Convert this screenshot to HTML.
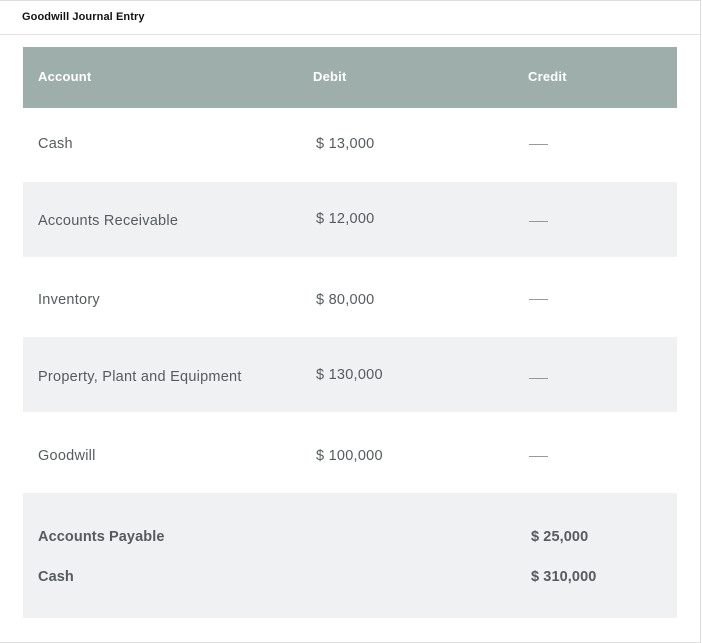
<!DOCTYPE html>
<html><head><style>
body{margin:0;width:702px;height:643px;background:#fff;font-family:"Liberation Sans",sans-serif;position:relative;overflow:hidden}
.frame{position:absolute;left:0;top:0;width:700px;height:641px;border:1px solid #ddd;border-left:none}
.title{position:absolute;left:22px;top:11px;font-size:11px;font-weight:bold;color:#111;letter-spacing:0.1px}
.hl{position:absolute;left:0;top:34px;width:701px;height:1px;background:#e2e2e2}
.r{position:absolute;left:23px;width:654px}
.hd{background:#9eafab;top:47px;height:61px}
.g{background:#f0f1f2}
.t{position:absolute;font-size:14.5px;color:#555b5e;letter-spacing:0.25px}
.h{position:absolute;font-size:13px;font-weight:bold;color:#fff;letter-spacing:0.2px}
.b{font-weight:bold;letter-spacing:0.1px}
.d{position:absolute;left:529px;width:19px;height:1px;background:#999}
</style></head><body>
<div class="frame"></div>
<div class="title">Goodwill Journal Entry</div>
<div class="hl"></div>
<div class="r hd"></div>
<div class="h" style="left:38px;top:69px">Account</div>
<div class="h" style="left:313px;top:69px">Debit</div>
<div class="h" style="left:528px;top:69px">Credit</div>
<div class="r g" style="top:182px;height:75px"></div>
<div class="r g" style="top:337px;height:75px"></div>
<div class="r g" style="top:493px;height:125px"></div>

<div class="t" style="left:38px;top:136px">Cash</div>
<div class="t" style="left:316px;top:136px">$ 13,000</div>
<div class="d" style="top:144px"></div>

<div class="t" style="left:38px;top:213px">Accounts Receivable</div>
<div class="t" style="left:316px;top:211px">$ 12,000</div>
<div class="d" style="top:221px"></div>

<div class="t" style="left:38px;top:292px">Inventory</div>
<div class="t" style="left:316px;top:292px">$ 80,000</div>
<div class="d" style="top:299px"></div>

<div class="t" style="left:38px;top:369px">Property, Plant and Equipment</div>
<div class="t" style="left:316px;top:367px">$ 130,000</div>
<div class="d" style="top:378px"></div>

<div class="t" style="left:38px;top:448px">Goodwill</div>
<div class="t" style="left:316px;top:448px">$ 100,000</div>
<div class="d" style="top:456px"></div>

<div class="t b" style="left:38px;top:529px">Accounts Payable</div>
<div class="t b" style="left:531px;top:529px">$ 25,000</div>
<div class="t b" style="left:38px;top:569px">Cash</div>
<div class="t b" style="left:531px;top:569px">$ 310,000</div>
</body></html>
